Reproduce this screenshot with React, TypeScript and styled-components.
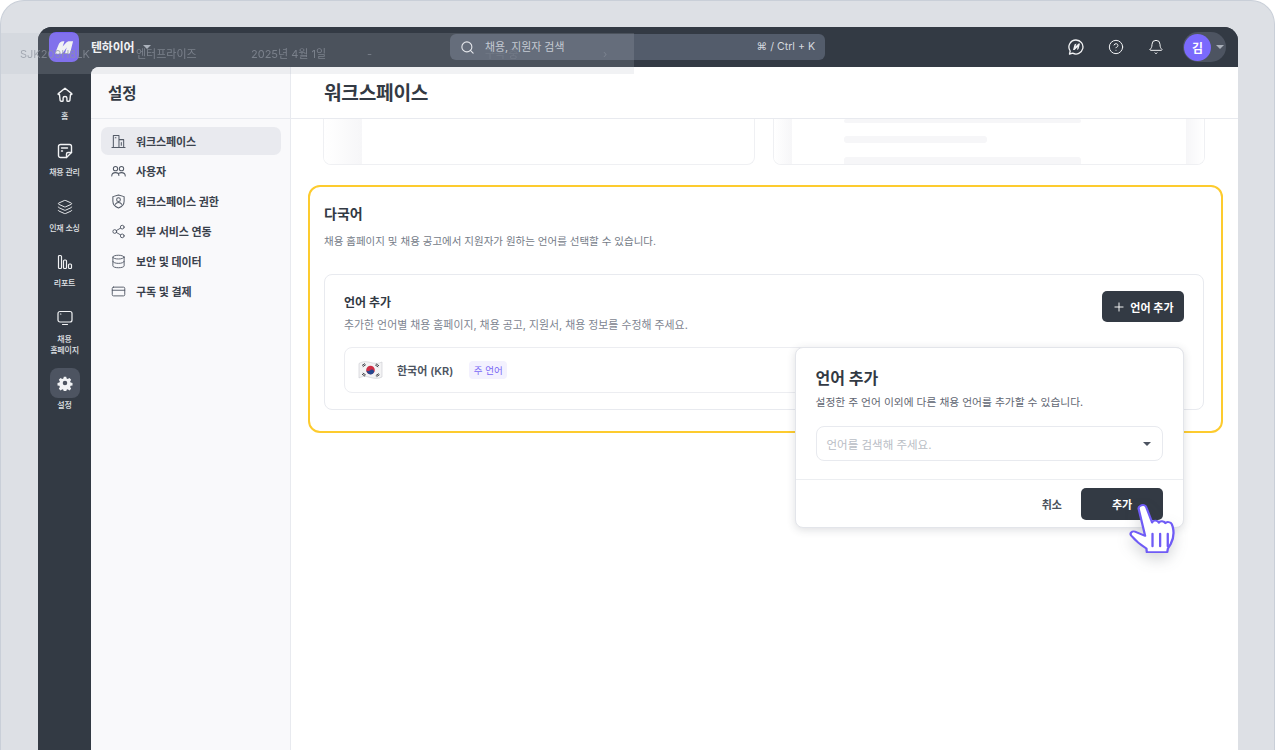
import React from "react";
import styled, { createGlobalStyle } from "styled-components";
import { Search, Plus, CircleHelp, Bell, Layers, Share2, Database, CreditCard } from "lucide-react";

const FONT = `Inter, "Noto Sans CJK KR", "Noto Sans", sans-serif`;

const Global = createGlobalStyle`
  html, body { margin: 0; padding: 0; width: 1275px; height: 750px; overflow: hidden; background: #fff; }
  * { box-sizing: border-box; }
  body { font-family: ${FONT}; }
`;

const Page = styled.div`
  position: relative; width: 1275px; height: 750px; overflow: hidden;
  background: #dde0e5; border: 1px solid #c9cfd8; border-bottom: 0; border-radius: 24px 24px 0 0;
  padding: 26px 36px 0 37px;
`;
const Frame = styled.div`
  display: flex; flex-direction: column; height: 100%; width: 1200px;
  border-radius: 14px 14px 0 0; overflow: hidden; background: #333a44;
`;
const TopBar = styled.header`
  flex: none; height: 40px; display: flex; align-items: center; background: #333a44; color: #fff;
  padding-left: 11px; position: relative;
`;
const Logo = styled.div`
  width: 30px; height: 30px; border-radius: 7px; background: #7561f5;
  display: flex; align-items: center; justify-content: center; margin-right: 12px;
`;
const Brand = styled.span`
  font-size: 12px; font-weight: 600; color: #fff; margin-right: 9px; letter-spacing: -0.2px; position: relative; top: -1px;
`;
const Caret = styled.span<{ $c?: string }>`
  width: 0; height: 0; border-left: 4px solid transparent; border-right: 4px solid transparent;
  border-top: 4px solid ${p => p.$c || "#aab0ba"}; display: block;
`;
const SearchBox = styled.div`
  position: absolute; left: 412px; top: 7px; width: 375px; height: 26px; border-radius: 6px; background: #535c6b;
  display: flex; align-items: center; padding: 0 10px; color: #f0f1f4; z-index: 1;
`;
const SearchText = styled.span`
  font-size: 10.9px; color: #c9ced6; margin-left: 10px; flex: 1; position: relative; top: -1px;
`;
const Kbd = styled.span`
  font-size: 10.6px; color: #d4d8de; position: relative; top: -1px;
`;
const TopRight = styled.div`
  margin-left: auto; display: flex; align-items: center; padding-right: 12px;
`;
const TopIcon = styled.div`
  width: 16px; height: 16px; margin-right: 24px; display: flex; align-items: center; justify-content: center; color: #f2f3f5;
`;
const AvatarPill = styled.div`
  width: 43px; height: 30px; border-radius: 15px; background: #4d5461; display: flex; align-items: center;
  padding-left: 1px; gap: 5px; margin-left: -5px;
`;
const Avatar = styled.div`
  width: 27px; height: 27px; border-radius: 50%; background: #7a6afd; color: #fff; font-size: 12px; font-weight: 600;
  display: flex; align-items: center; justify-content: center;
`;
const Body = styled.div`
  flex: 1; display: flex; min-height: 0;
`;
const Rail = styled.nav`
  flex: none; width: 53px; background: #333a44; display: flex; flex-direction: column; align-items: center; padding-top: 16px;
`;
const RailItem = styled.div<{ $h?: number }>`
  height: ${p => p.$h || 55.75}px; flex: none; width: 100%; display: flex; flex-direction: column; align-items: center; color: #f2f3f5;
`;
const RailIcon = styled.div<{ $active?: boolean }>`
  width: 30px; height: 24px; display: flex; align-items: center; justify-content: center;
  ${p => p.$active && `height: 30px; border-radius: 8px; background: #4d5461; margin-top: 5px; margin-bottom: -2px;`}
`;
const RailLabel = styled.div`
  font-size: 8px; line-height: 11px; color: #e0e3e7; text-align: center; font-weight: 500; margin-top: 4px; white-space: nowrap; letter-spacing: -0.2px;
`;
const Panel = styled.div`
  flex: 1; display: flex; background: #fff; border-radius: 8px 0 0 0; overflow: hidden; min-width: 0;
`;
const SideMenu = styled.aside`
  flex: none; width: 200px; background: #f9f9fb; border-right: 1px solid #e8eaef;
`;
const SideHeader = styled.div`
  height: 52px; border-bottom: 1px solid #e8eaef; padding: 0 17px 2px; display: flex; align-items: center;
  font-size: 15.5px; font-weight: 700; color: #333a44;
`;
const SideList = styled.div`
  padding: 8px 9px 8px 10px; display: flex; flex-direction: column; gap: 2px;
`;
const SideItem = styled.div<{ $active?: boolean }>`
  height: 28px; border-radius: 7px; display: flex; align-items: center; padding-left: 10px; gap: 10px;
  font-size: 11px; font-weight: 600; color: #3a414c; letter-spacing: -0.1px;
  background: ${p => (p.$active ? "#e9eaef" : "transparent")};
  svg { flex: none; width: 15px; height: 15px; color: #545b67; }
`;
const Main = styled.main`
  flex: 1; display: flex; flex-direction: column; min-width: 0; position: relative;
`;
const MainHeader = styled.div`
  flex: none; height: 52px; border-bottom: 1px solid #e8eaef; padding: 0 33px 2px; display: flex; align-items: center;
  font-size: 19.2px; font-weight: 700; color: #333a44; letter-spacing: -0.3px;
`;
const Clipped = styled.div`
  height: 46px; flex: none; display: flex; gap: 18px; padding: 0 33px 0 32px;
`;
const GhostCard = styled.div`
  flex: 1; height: 46px; border: 1px solid #eff0f3; border-top: 0; border-radius: 0 0 8px 8px; display: flex; overflow: hidden;
`;
const Fade = styled.div<{ $w: number; $dir: "left" | "right" }>`
  width: ${p => p.$w}px; flex: none;
  background: linear-gradient(to ${p => p.$dir}, #fff, #f6f6f8);
`;
const GhostBody = styled.div`
  flex: 1; padding-left: 52px; position: relative; display: flex; flex-direction: column;
`;
const Skeleton = styled.div<{ $w: number; $h: number; $mt: number }>`
  width: ${p => p.$w}px; height: ${p => p.$h}px; margin-top: ${p => p.$mt}px; background: #f6f6f8; border-radius: 3px; flex: none;
`;
const Highlight = styled.section`
  margin: 20px 15px 0 17px; height: 248px; flex: none; border: 2px solid #fdcb2e; border-radius: 12px; padding: 14px 17px 14px 14px;
  position: relative;
`;
const SectionTitle = styled.h2`
  margin: 5px 0 0; font-size: 14px; line-height: 16px; font-weight: 700; color: #333a44;
`;
const SectionDesc = styled.p`
  margin: 13px 0 0; font-size: 10.5px; line-height: 14px; color: #747b87;
`;
const LangCard = styled.div`
  margin-top: 25px; height: 136px; border: 1px solid #e8eaef; border-radius: 8px; padding: 16px 19px; position: relative;
`;
const LangHead = styled.div`
  display: flex; justify-content: space-between; align-items: flex-start;
`;
const LangTitle = styled.div`
  font-size: 12px; font-weight: 700; color: #333a44; line-height: 18px; margin-top: 3px;
`;
const LangSub = styled.div`
  font-size: 10.9px; color: #7d8490; line-height: 14px; margin-top: 6px;
`;
const DarkButton = styled.button<{ $w: number; $h: number }>`
  width: ${p => p.$w}px; height: ${p => p.$h}px; border: 0; border-radius: 5px; background: #333a44; color: #fff;
  font-family: inherit; font-size: 11px; font-weight: 600; display: flex; align-items: center; justify-content: center; gap: 4px; padding: 0;
`;
const LangRow = styled.div`
  margin-top: 15px; height: 46px; border: 1px solid #ecedf1; border-radius: 8px; display: flex; align-items: center; padding-left: 12px;
`;
const LangName = styled.span`
  font-size: 11px; font-weight: 600; color: #4d5461; margin-left: 13px;
`;
const Tag = styled.span`
  margin-left: 16px; height: 18px; padding: 0 4.5px; border-radius: 4px; background: #f3f1fe; color: #7a68f5; font-size: 9.5px;
  display: flex; align-items: center;
`;
const Dialog = styled.div`
  position: absolute; left: 504px; top: 280px; width: 389px; height: 181px; background: #fff; border: 1px solid #e3e5ea; border-radius: 8px;
  box-shadow: 0 2px 8px rgba(51, 58, 68, 0.16); z-index: 3; display: flex; flex-direction: column;
`;
const DialogTop = styled.div`
  flex: 1; padding: 20px 20px 0 19.5px; border-bottom: 1px solid #eceef1;
`;
const DialogTitle = styled.div`
  font-size: 16px; line-height: 20px; font-weight: 700; color: #333a44;
`;
const DialogDesc = styled.div`
  font-size: 10.75px; line-height: 14px; color: #5f6672; margin-top: 8px;
`;
const SelectBox = styled.div`
  margin-top: 16px; height: 35px; border: 1px solid #e8eaef; border-radius: 8px; display: flex; align-items: center; justify-content: space-between;
  padding: 0 11px 0 10px; font-size: 11.5px; color: #b9bdc5;
`;
const DialogFoot = styled.div`
  flex: none; height: 47px; display: flex; align-items: center; justify-content: flex-end; padding: 0 20px; gap: 19px;
`;
const Cancel = styled.span`
  font-size: 11px; font-weight: 600; color: #4a515c;
`;
const Pointer = styled.svg`
  position: absolute; left: 838px; top: 435px; z-index: 4; filter: drop-shadow(0 6px 7px rgba(51, 58, 68, 0.2));
`;
const GhostRow = styled.div`
  position: absolute; left: 0; top: 32px; width: 633px; height: 41px; background: rgba(180, 185, 195, 0.19); z-index: 5; pointer-events: none;
  font-size: 11px; color: #8f95a0;
`;
const GhostCell = styled.span<{ $x: number; $o?: number }>`
  position: absolute; left: ${p => p.$x}px; top: 14px; line-height: 14px; white-space: nowrap; opacity: ${p => p.$o ?? 0.7};
`;

const S = { fill: "none", stroke: "currentColor", strokeWidth: 1.4, strokeLinecap: "round" as const, strokeLinejoin: "round" as const };

const HomeIcon = () => (<svg width="16" height="16" viewBox="0 0 16 16" {...S}><path d="M8 1.2 1.3 6.6c-.4.3-.2.9.3.9h.9l.6 5.8c.1.6.5.9 1 .9h1.2c.5 0 .8-.3.8-.8V11c0-.9.6-1.5 1.9-1.5s1.9.6 1.9 1.5v2.4c0 .5.3.8.8.8h1.2c.5 0 .9-.3 1-.9l.6-5.8h.9c.5 0 .7-.6.3-.9Z" /></svg>);
const NoteIcon = () => (<svg width="16" height="16" viewBox="0 0 16 16" {...S}><path d="M3.5 1.5h9c1.1 0 2 .9 2 2v6l-5 5h-6c-1.1 0-2-.9-2-2v-9c0-1.1.9-2 2-2Z" /><path d="M14.5 9.5h-3.5c-.9 0-1.5.6-1.5 1.5v3.5M4.5 5h6M4.5 8h1" /></svg>);
const BarsIcon = () => (<svg width="16" height="16" viewBox="0 0 16 16" {...S} strokeWidth={1.2}><rect x="1.5" y="1.5" width="3" height="13" rx="1" /><rect x="6.5" y="6" width="3" height="8.5" rx="1" /><rect x="11.5" y="10" width="3" height="4.5" rx="1" /></svg>);
const ScreenIcon = () => (<svg width="16" height="16" viewBox="0 0 16 16" {...S} strokeWidth={1.2}><rect x="1" y="1.5" width="14" height="10.5" rx="2" /><path d="M5.500 14.500h5M3.500 4h.4" /></svg>);
const GearIcon = () => (<svg width="16" height="16" viewBox="0 0 24 24" fill="currentColor"><path fillRule="evenodd" d="M10 1.5h4l.7 3.2 1.9.8 2.800-1.800 2.900 2.900-1.800 2.800.8 1.900 3.200.7v4l-3.200.7-.8 1.900 1.800 2.800-2.900 2.900-2.800-1.800-1.900.8-.7 3.200h-4l-.7-3.200-1.900-.8-2.800 1.800-2.900-2.900 1.800-2.800-.8-1.900-3.200-.7v-4l3.200-.7.8-1.900-1.800-2.800 2.900-2.900 2.800 1.800 1.900-.8ZM12 8.200a3.800 3.800 0 1 0 0 7.600 3.800 3.800 0 0 0 0-7.600Z" transform="translate(1.2 1.2) scale(.9)" /></svg>);
const BuildingIcon = () => (<svg viewBox="0 0 16 16" {...S} strokeWidth={1.1}><path d="M1 14.500h14M2.500 14.500V1.500h6v13M8.500 6h5v8.500M4.500 4h.8M11 9v3" /></svg>);
const UsersIcon = () => (<svg viewBox="0 0 16 16" {...S} strokeWidth={1.1}><circle cx="4.800" cy="5" r="2.300" /><circle cx="11.200" cy="5" r="2.300" /><path d="M.8 12.800c0-2.100 1.700-3.600 4-3.600s3.600 1.200 3.600 3M8.400 10c.6-.5 1.700-.8 2.800-.8 2.300 0 4 1.500 4 3.600" /></svg>);
const ShieldIcon = () => (<svg viewBox="0 0 16 16" {...S} strokeWidth={1.1}><path d="M8 1 14 2.800v5c0 3.300-2.500 5.800-6 7.200-3.500-1.400-6-3.900-6-7.200v-5Z" /><circle cx="8" cy="6" r="2" /><path d="M4.600 11c.6-1.300 1.900-2 3.400-2s2.800.7 3.400 2" /></svg>);
const ChatLogo = () => (<svg width="16" height="16" viewBox="0 0 16 16"><path d="M8 1a7 7 0 1 1-3.300 13.200L1.500 15l.7-3A7 7 0 0 1 8 1Z" fill="none" stroke="currentColor" strokeWidth="1.300" strokeLinejoin="round" /><path d="M5 11l1.500-5.500 2-1-1 3 3-3h1.500L10.500 10l-1.500 1 .6-3-3 3Z" fill="currentColor" /></svg>);
const Flag = () => (<svg width="27" height="22" viewBox="0 0 26 22"><path d="M1.500 4.500C6 2 9 2.500 13 3.500s8 1.500 11.500-.5v15c-3.500 2-7.500 1.500-11.500.5S6 16.500 1.500 19Z" fill="#f3f3f4" stroke="#c9cbd0" strokeWidth=".6" /><circle cx="13" cy="11" r="4.300" fill="#cf2f45" /><path d="M8.800 11.300c1.200 1.400 2.700 1 3.500.2s2.200-1.300 3.300-.6c.8.5 1.100 1 1.100 1.500-.5 1.900-2 3-3.700 3-2.300 0-3.800-1.800-4.200-4.100Z" fill="#24478f" /><path d="M4.500 6.500l3-2M5.300 7.700l3-2M18.300 16.600l3-2M19 17.700l3-2M4.500 15.200l3 2M5.300 14l3 2M18.500 4.800l3 2M17.700 6l3 2" stroke="#33363c" strokeWidth=".9" /></svg>);

const menu = [
  { t: "워크스페이스", i: <BuildingIcon />, a: true },
  { t: "사용자", i: <UsersIcon /> },
  { t: "워크스페이스 권한", i: <ShieldIcon /> },
  { t: "외부 서비스 연동", i: <Share2 strokeWidth={1.5} /> },
  { t: "보안 및 데이터", i: <Database strokeWidth={1.5} /> },
  { t: "구독 및 결제", i: <CreditCard strokeWidth={1.5} /> },
];

export default function App() {
  return (
    <>
      <Global />
      <Page>
        <Frame>
          <TopBar>
            <Logo>
              <svg width="20" height="15" viewBox="0 0 22 16"><path d="M1 15 5 5c1-2.500 2.500-4 5-4h1.500L9.500 7 13 3c1-1.300 2.500-2 4-2h4l-3 12c-.3 1.300-1 2-2.300 2H12l2-7-4 5.500c-.7 1-1.500 1.500-2.800 1.500Z" fill="#fff" /></svg>
            </Logo>
            <Brand>텐하이어</Brand>
            <Caret />
            <SearchBox>
              <Search size={15} strokeWidth={1.8} />
              <SearchText>채용, 지원자 검색</SearchText>
              <Kbd>⌘ / Ctrl + K</Kbd>
            </SearchBox>
            <TopRight>
              <TopIcon><ChatLogo /></TopIcon>
              <TopIcon><CircleHelp size={16} strokeWidth={1.5} /></TopIcon>
              <TopIcon><Bell size={16} strokeWidth={1.5} /></TopIcon>
              <AvatarPill>
                <Avatar>김</Avatar>
                <Caret $c="#aab0ba" />
              </AvatarPill>
            </TopRight>
          </TopBar>
          <Body>
            <Rail>
              <RailItem><RailIcon><HomeIcon /></RailIcon><RailLabel>홈</RailLabel></RailItem>
              <RailItem><RailIcon><NoteIcon /></RailIcon><RailLabel>채용 관리</RailLabel></RailItem>
              <RailItem><RailIcon><Layers size={16} strokeWidth={1.4} /></RailIcon><RailLabel>인재 소싱</RailLabel></RailItem>
              <RailItem><RailIcon><BarsIcon /></RailIcon><RailLabel>리포트</RailLabel></RailItem>
              <RailItem $h={57}><RailIcon><ScreenIcon /></RailIcon><RailLabel>채용<br />홈페이지</RailLabel></RailItem>
              <RailItem><RailIcon $active><GearIcon /></RailIcon><RailLabel>설정</RailLabel></RailItem>
            </Rail>
            <Panel>
              <SideMenu>
                <SideHeader>설정</SideHeader>
                <SideList>
                  {menu.map(m => (
                    <SideItem key={m.t} $active={m.a}>{m.i}{m.t}</SideItem>
                  ))}
                </SideList>
              </SideMenu>
              <Main>
                <MainHeader>워크스페이스</MainHeader>
                <Clipped>
                  <GhostCard>
                    <Fade $w={38} $dir="right" />
                    <GhostBody />
                  </GhostCard>
                  <GhostCard>
                    <Fade $w={18} $dir="right" />
                    <GhostBody>
                      <Skeleton $w={237} $h={4} $mt={0} />
                      <Skeleton $w={143} $h={7} $mt={13} />
                      <Skeleton $w={237} $h={9} $mt={14} />
                    </GhostBody>
                    <Fade $w={18} $dir="left" />
                  </GhostCard>
                </Clipped>
                <Highlight>
                  <SectionTitle>다국어</SectionTitle>
                  <SectionDesc>채용 홈페이지 및 채용 공고에서 지원자가 원하는 언어를 선택할 수 있습니다.</SectionDesc>
                  <LangCard>
                    <LangHead>
                      <div>
                        <LangTitle>언어 추가</LangTitle>
                        <LangSub>추가한 언어별 채용 홈페이지, 채용 공고, 지원서, 채용 정보를 수정해 주세요.</LangSub>
                      </div>
                      <DarkButton $w={82} $h={31}><Plus size={14} strokeWidth={1.6} />언어 추가</DarkButton>
                    </LangHead>
                    <LangRow>
                      <Flag />
                      <LangName>한국어 (KR)</LangName>
                      <Tag>주 언어</Tag>
                    </LangRow>
                  </LangCard>
                </Highlight>
                <Dialog>
                  <DialogTop>
                    <DialogTitle>언어 추가</DialogTitle>
                    <DialogDesc>설정한 주 언어 이외에 다른 채용 언어를 추가할 수 있습니다.</DialogDesc>
                    <SelectBox>언어를 검색해 주세요.<Caret $c="#4d5461" /></SelectBox>
                  </DialogTop>
                  <DialogFoot>
                    <Cancel>취소</Cancel>
                    <DarkButton $w={82} $h={32}>추가</DarkButton>
                  </DialogFoot>
                </Dialog>
                <Pointer width="61" height="57" viewBox="0 0 48 54" preserveAspectRatio="none">
                  <path d="M9 3.500c1.800-1.300 4-.6 4.600 1.500l4.600 14.500c.6-2.500 4.500-2.500 5.300.2.700-2.100 4.300-2.100 5.100.4.900-1.700 4.300-1.400 5 .8l.8 2.600c1.100 5.100.5 11.600-1.600 16.300l-2.200 4.400-.5 3.300H14l-.3-3.500c-4.500-3.200-9-8-12-12.300-1.300-2 .6-4.600 3-3.600l8 4L7.700 7c-.4-1.400 0-2.700 1.300-3.500Z" fill="#fff" stroke="#6f5bf6" strokeWidth="1.800" strokeLinejoin="round" />
                  <path d="M18.500 30v12M24.500 30v12M30.500 30v12" stroke="#6f5bf6" strokeWidth="1.800" strokeLinecap="round" />
                </Pointer>
              </Main>
            </Panel>
          </Body>
        </Frame>
        <GhostRow>
          <GhostCell $x={19}>SJK209H8LK</GhostCell>
          <GhostCell $x={135}>엔터프라이즈</GhostCell>
          <GhostCell $x={250}>2025년 4월 1일</GhostCell>
          <GhostCell $x={366}>-</GhostCell>
          <GhostCell $x={484} $o={0.3}>구독 중</GhostCell>
          <GhostCell $x={602} $o={0.5}>›</GhostCell>
        </GhostRow>
      </Page>
    </>
  );
}
